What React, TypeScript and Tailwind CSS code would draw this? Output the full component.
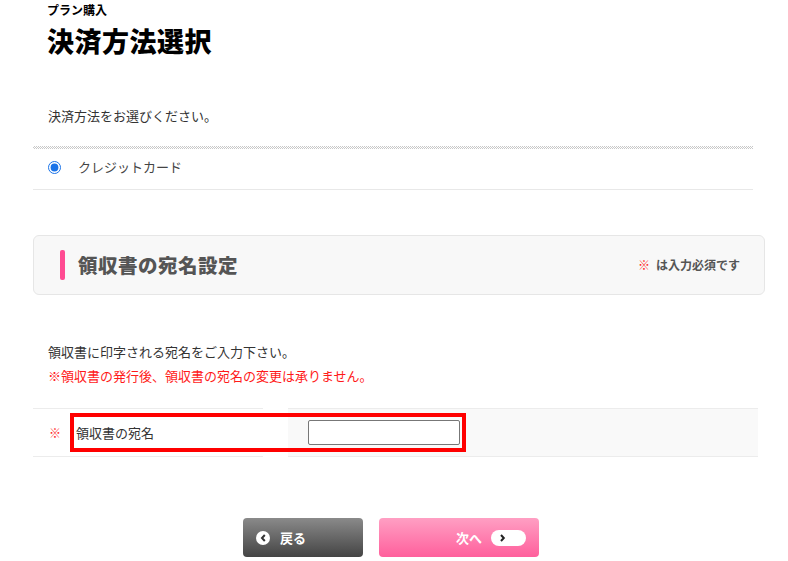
import { useState } from "react";

const jp = "font-['Noto_Sans_CJK_JP','Noto_Sans',sans-serif]";

export default function App() {
  const [name, setName] = useState("");

  return (
    <div className={`${jp} min-h-[561px] w-[788px] bg-white pl-[33px] text-[#333]`}>
      {/* Title */}
      <div className="pl-[14px] pt-[1px]">
        <p className="text-[12px] font-bold leading-[18px] text-black">プラン購入</p>
        <h1 className="mt-[5px] text-[27px] font-black leading-[34px] tracking-[0.5px] text-black">
          決済方法選択
        </h1>
      </div>

      {/* Payment method */}
      <p className="mt-[48px] pl-[15px] text-[13px] leading-[20px] text-[#333]">
        決済方法をお選びください。
      </p>
      <div className="mt-[20px] h-[3px] w-[720px] bg-[conic-gradient(#c8c8c8_25%,#fff_0_50%,#c8c8c8_0_75%,#fff_0)] bg-[length:2px_2px]" />
      <label className="flex h-[41px] w-[720px] items-center border-b border-[#e8e8e8] pb-[4px] pl-[15px]">
        <input
          type="radio"
          name="pay"
          defaultChecked
          className="m-0 h-[13px] w-[13px] accent-[#1a73e8]"
        />
        <span className="ml-[17px] text-[13px] text-[#444]">クレジットカード</span>
      </label>

      {/* Section header */}
      <div className="mt-[45px] flex h-[60px] w-[732px] items-center justify-between rounded-[6px] border border-[#e6e6e6] bg-[#f8f8f8] pl-[26px] pr-[24px]">
        <div className="flex items-center">
          <span className="h-[30px] w-[5px] rounded-[2px] bg-[#ff4b92]" />
          <h2 className="ml-[13px] text-[19.5px] font-black tracking-[0.5px] text-[#555]">
            領収書の宛名設定
          </h2>
        </div>
        <p className="text-[12px] font-bold text-[#555]">
          <span className="mr-[6px] text-[#ff2a2a]">※</span>は入力必須です
        </p>
      </div>

      {/* Notes */}
      <p className="mt-[47px] pl-[15px] text-[13px] leading-[20px] text-[#333]">
        領収書に印字される宛名をご入力下さい。
      </p>
      <p className="mt-[4px] pl-[15px] text-[13px] leading-[20px] text-[#ff1a1a]">
        ※領収書の発行後、領収書の宛名の変更は承りません。
      </p>

      {/* Input row */}
      <div className="mt-[22px] flex h-[49px] w-[725px]">
        <div className="flex w-[230px] items-center border-y border-[#ececec]">
          <span className="ml-[16px] text-[12px] text-[#ff2a2a]">※</span>
          <span className="ml-[15px] text-[13px] text-[#333]">領収書の宛名</span>
        </div>
        <div className="ml-[25px] flex flex-1 items-center border-y border-[#ececec] bg-[#f9f9f9] pl-[20px]">
          <input
            value={name}
            onChange={(e) => setName(e.target.value)}
            className="h-[25px] w-[152px] rounded-[2px] border border-[#777] bg-white px-1 text-[13px] outline-none"
          />
        </div>
        {/* highlight box */}
        <div className="pointer-events-none absolute left-[70px] top-[413px] h-[39px] w-[396px] border-[4px] border-[#ff0000]" />
      </div>

      {/* Buttons */}
      <div className="mt-[61px] flex gap-[16px] pl-[210px]">
        <button className="flex h-[39px] w-[120px] items-center rounded-[4px] bg-[linear-gradient(#8a8a8a,#444)] pl-[13px] text-[13px] font-bold text-white">
          <span className="flex h-[14px] w-[14px] items-center justify-center rounded-full bg-white">
            <svg width="7" height="8" viewBox="0 0 7 8">
              <path d="M4.8 1 L2 4 L4.8 7" fill="none" stroke="#333" strokeWidth="2" />
            </svg>
          </span>
          <span className="ml-[10px]">戻る</span>
        </button>
        <button className="flex h-[39px] w-[160px] items-center rounded-[4px] bg-[linear-gradient(#ff9fc3,#ff5f9c)] pl-[77px] text-[13px] font-bold text-white">
          <span>次へ</span>
          <span className="ml-[9px] flex h-[16px] w-[35px] items-center rounded-full bg-white pl-[8px]">
            <svg width="7" height="8" viewBox="0 0 7 8">
              <path d="M2 1 L4.8 4 L2 7" fill="none" stroke="#222" strokeWidth="2" />
            </svg>
          </span>
        </button>
      </div>
    </div>
  );
}
